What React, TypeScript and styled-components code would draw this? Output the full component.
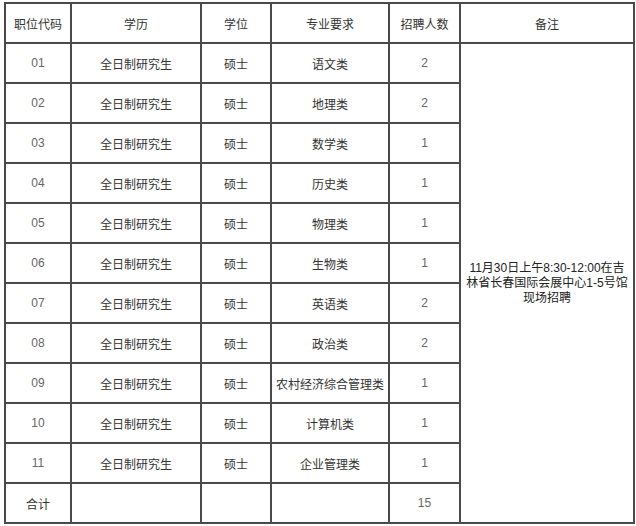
import React from 'react';
import styled, { createGlobalStyle } from 'styled-components';

const GlobalStyle = createGlobalStyle`
  html, body {
    margin: 0;
    padding: 0;
    background: #fff;
  }
  body {
    font-family: "Liberation Sans", "Noto Sans CJK SC", sans-serif;
    font-size: 12px;
    color: #333;
  }
`;

const Page = styled.div`
  padding: 2px 0 0 4px;
`;

const Table = styled.table`
  border-collapse: collapse;
  table-layout: fixed;
  width: 629px;
  border: 2px solid #4a4a4a;
`;

const HeadCell = styled.th`
  box-sizing: border-box;
  height: 40px;
  padding: 0;
  border: 2px solid #4a4a4a;
  font-weight: normal;
  text-align: center;
  vertical-align: middle;
  color: #333;
`;

const Cell = styled.td<{ $num?: boolean }>`
  box-sizing: border-box;
  height: 40px;
  padding: 0;
  border: 2px solid #4a4a4a;
  text-align: center;
  vertical-align: middle;
  color: ${(p) => (p.$num ? '#666' : '#333')};
`;

const NoteCell = styled.td`
  padding: 0 4px;
  border: 2px solid #4a4a4a;
  text-align: center;
  vertical-align: middle;
  line-height: 15px;
  color: #222;
`;

const columns = [
  { title: '职位代码', w: 66 },
  { title: '学历', w: 130 },
  { title: '学位', w: 70 },
  { title: '专业要求', w: 118 },
  { title: '招聘人数', w: 71 },
  { title: '备注', w: 174 },
];

const rows = [
  { code: '01', major: '语文类', count: '2' },
  { code: '02', major: '地理类', count: '2' },
  { code: '03', major: '数学类', count: '1' },
  { code: '04', major: '历史类', count: '1' },
  { code: '05', major: '物理类', count: '1' },
  { code: '06', major: '生物类', count: '1' },
  { code: '07', major: '英语类', count: '2' },
  { code: '08', major: '政治类', count: '2' },
  { code: '09', major: '农村经济综合管理类', count: '1' },
  { code: '10', major: '计算机类', count: '1' },
  { code: '11', major: '企业管理类', count: '1' },
];

export default function App() {
  return (
    <>
      <GlobalStyle />
      <Page>
        <Table>
          <colgroup>
            {columns.map((c) => (
              <col key={c.title} style={{ width: c.w }} />
            ))}
          </colgroup>
          <thead>
            <tr>
              {columns.map((c) => (
                <HeadCell key={c.title}>{c.title}</HeadCell>
              ))}
            </tr>
          </thead>
          <tbody>
            {rows.map((r, i) => (
              <tr key={r.code}>
                <Cell $num>{r.code}</Cell>
                <Cell>全日制研究生</Cell>
                <Cell>硕士</Cell>
                <Cell>{r.major}</Cell>
                <Cell $num>{r.count}</Cell>
                {i === 0 && (
                  <NoteCell rowSpan={12}>
                    11月30日上午8:30-12:00在吉林省长春国际会展中心1-5号馆现场招聘
                  </NoteCell>
                )}
              </tr>
            ))}
            <tr>
              <Cell>合计</Cell>
              <Cell />
              <Cell />
              <Cell />
              <Cell $num>15</Cell>
            </tr>
          </tbody>
        </Table>
      </Page>
    </>
  );
}
